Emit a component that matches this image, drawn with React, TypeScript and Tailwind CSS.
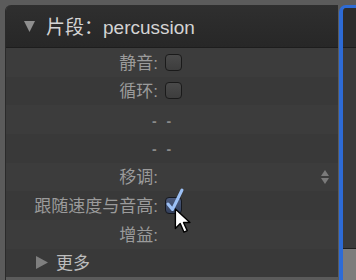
import React from "react";

const font = { fontFamily: '"Liberation Sans", "Noto Sans CJK SC", sans-serif' };

const Checkbox = ({ checked = false }: { checked?: boolean }) => (
  <div
    className={
      checked
        ? "relative w-[17px] h-[17px] rounded-[4px] border border-[#15181f] bg-gradient-to-b from-[#4b5a7c] to-[#34405c]"
        : "w-[17px] h-[17px] rounded-[4px] border border-[#1a1a1a] bg-gradient-to-b from-[#4a4a4a] to-[#3d3d3d]"
    }
  >
    {checked && (
      <svg className="absolute -left-[1px] -top-[10px] overflow-visible" width="22" height="26" viewBox="0 0 22 26">
        <path d="M3 16 L7.5 21.5 L17 2" fill="none" stroke="#9cc0f5" strokeWidth="3" strokeLinecap="round" strokeLinejoin="round" />
      </svg>
    )}
  </div>
);

const Row = ({ children, dark }: { children?: React.ReactNode; dark?: boolean }) => (
  <div className={`h-[28.67px] flex items-center relative ${dark ? "bg-[#393939]" : "bg-[#3c3c3c]"}`}>{children}</div>
);

const Label = ({ text }: { text: string }) => (
  <div className="w-[152px] pt-[2px] text-right text-[17px] text-[#9b9b9b] leading-none">{text}</div>
);

export default function App() {
  return (
    <div className="relative w-[356px] h-[280px] bg-[#5b5b5b] flex overflow-hidden" style={font}>
      <div className="ml-[5px] mt-[5px] w-[333px] flex flex-col rounded-tl-[6px] overflow-hidden border-l border-[#2a2a2a]">
        <div className="h-[43px] shrink-0 flex items-center bg-gradient-to-b from-[#2f2f2f] to-[#272727] border-b border-[#1d1d1d]">
          <svg className="ml-[18px] mt-[1px]" width="11" height="11" viewBox="0 0 11 11">
            <polygon points="0,0 11,0 5.5,11" fill="#8e8e8e" />
          </svg>
          <span className="ml-[11px] pt-[2px] text-[19px] text-[#d4d4d4] leading-none">片段：percussion</span>
        </div>
        <Row>
          <Label text="静音:" />
          <div className="ml-[7px]"><Checkbox /></div>
        </Row>
        <Row dark>
          <Label text="循环:" />
          <div className="ml-[7px]"><Checkbox /></div>
        </Row>
        <Row>
          <span className="ml-[146px] pt-[2px] text-[14px] text-[#8a8a8a] font-bold tracking-[3px] leading-none">- -</span>
        </Row>
        <Row dark>
          <span className="ml-[146px] pt-[2px] text-[14px] text-[#8a8a8a] font-bold tracking-[3px] leading-none">- -</span>
        </Row>
        <Row>
          <Label text="移调:" />
          <svg className="ml-auto mr-[9px]" width="8" height="14" viewBox="0 0 8 14">
            <polygon points="4,0 8,6 0,6" fill="#7a7a7a" />
            <polygon points="0,8 8,8 4,14" fill="#7a7a7a" />
          </svg>
        </Row>
        <Row dark>
          <Label text="跟随速度与音高:" />
          <div className="ml-[7px]"><Checkbox checked /></div>
        </Row>
        <Row>
          <Label text="增益:" />
        </Row>
        <Row dark>
          <svg className="ml-[30px]" width="12" height="13" viewBox="0 0 12 13">
            <polygon points="0,0 12,6.5 0,13" fill="#7f7f7f" />
          </svg>
          <span className="ml-[8px] pt-[2px] text-[17px] text-[#bdbdbd] leading-none">更多</span>
        </Row>
      </div>
      <div className="ml-[1px] mt-[5px] flex-1 flex flex-col border-l-[4px] border-t-[3px] border-[#2d6bd6] rounded-tl-[7px] overflow-hidden">
        <div className="h-[40px] bg-[#2c2c2c] border-b border-[#1d1d1d]" />
        <div className="h-[201px] bg-[#3a3a3a] border-b border-[#1d1d1d]" />
        <div className="flex-1 bg-[#7c7c7c]" />
      </div>
      <svg className="absolute left-[173px] top-[208px]" width="22" height="28" viewBox="0 0 18 26">
        <path d="M1 1 L1 19 L5.5 14.5 L9 22.5 L12 21 L8.5 13.5 L14.5 13.5 Z" fill="#ffffff" stroke="#000000" strokeWidth="1.3" strokeLinejoin="round" />
      </svg>
    </div>
  );
}
